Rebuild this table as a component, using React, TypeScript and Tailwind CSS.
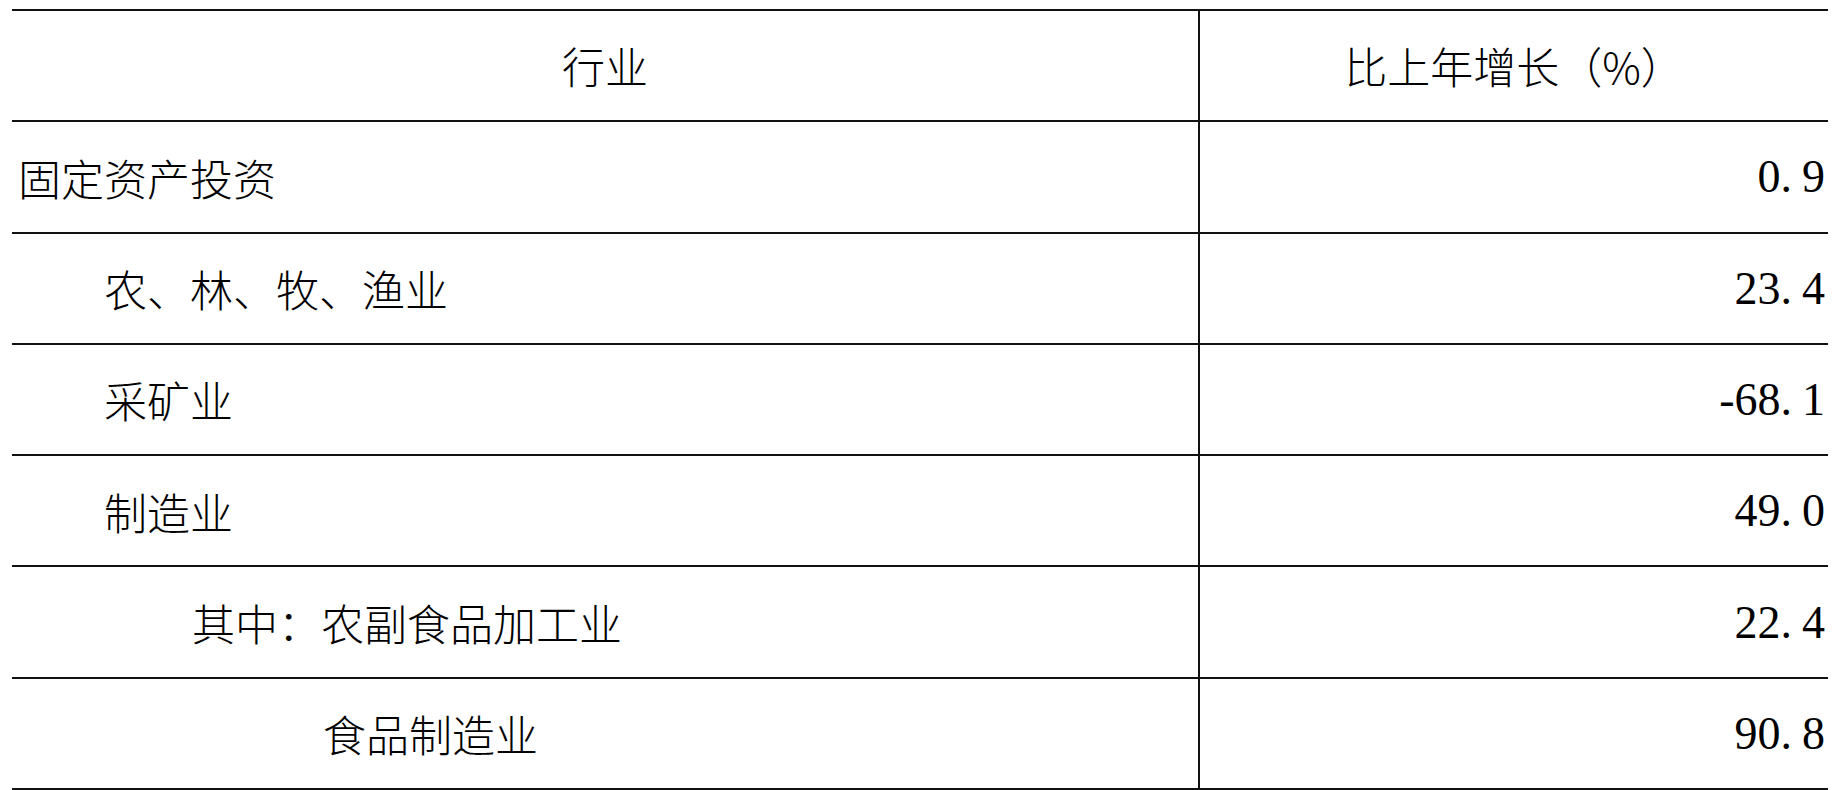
const rows = [
  { name: '固定资产投资', indent: 0, value: '0.9' },
  { name: '农、林、牧、渔业', indent: 2, value: '23.4' },
  { name: '采矿业', indent: 2, value: '-68.1' },
  { name: '制造业', indent: 2, value: '49.0' },
  { name: '其中：农副食品加工业', indent: 4, value: '22.4' },
  { name: '食品制造业', indent: 7, value: '90.8' },
];

const indentClass: Record<number, string> = {
  0: 'pl-[6px]',
  2: 'pl-[92px]',
  4: 'pl-[180px]',
  7: 'pl-[311px]',
};

const cjk = "font-['Noto_Sans_CJK_SC',sans-serif]";
const num = "font-['Liberation_Serif','Noto_Sans_CJK_SC',serif]";

// SimSun-style figures: the point takes a half-width cell, so leave room after it
const Value = ({ v }: { v: string }) => {
  const [whole, frac] = v.split('.');
  return (
    <span>
      {whole}
      <span className="mr-[10px]">.</span>
      {frac}
    </span>
  );
};

export default function App() {
  return (
    <div className="min-h-screen w-full bg-white">
      <div className="ml-[12px] mt-[9px] w-[1816px] border-t-2 border-[#111] text-black">
        {/* Header */}
        <div className="flex h-[111.3px] border-b-2 border-[#111]">
          <div className={`flex w-[1188px] items-center justify-center border-r-2 border-[#111] text-[43px] font-light ${cjk}`}>
            行业
          </div>
          <div className={`flex flex-1 items-center justify-center text-[43px] font-light ${cjk}`}>
            比上年增长（%）
          </div>
        </div>

        {rows.map((row, i) => (
          <div key={i} className="flex h-[111.3px] border-b-2 border-[#111]">
            <div
              className={`flex w-[1188px] items-center border-r-2 border-[#111] text-[43px] font-light ${indentClass[row.indent]} ${cjk}`}
            >
              {row.name}
            </div>
            <div className={`flex flex-1 items-center justify-end pr-[3px] text-[46px] ${num}`}>
              <Value v={row.value} />
            </div>
          </div>
        ))}
      </div>
    </div>
  );
}
